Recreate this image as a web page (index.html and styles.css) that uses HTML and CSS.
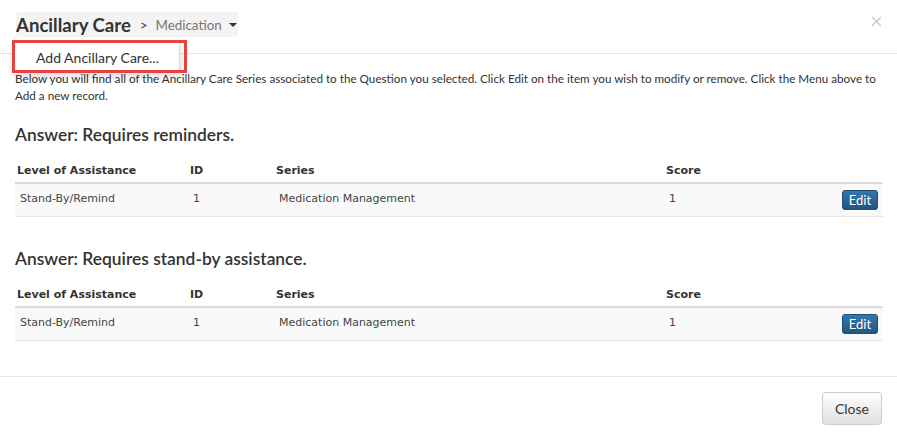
FILE: index.html
```html
<!DOCTYPE html>
<html>
<head>
<meta charset="utf-8">
<link rel="stylesheet" href="styles.css">
</head>
<body>
<div class="modal">
  <div class="modal-header">
    <div class="title-wrap">
      <div class="title-btn">
        <span class="title-main">Ancillary Care</span>
        <span class="title-sep">&gt;</span>
        <span class="title-sub">Medication</span>
        <span class="caret"></span>
      </div>
      <div class="menu">
        <div class="menu-item">Add Ancillary Care...</div>
      </div>
      <div class="highlight"></div>
    </div>
    <button class="close-x" aria-label="Close">
      <svg width="11" height="11" viewBox="0 0 11 11"><path d="M1 1 L10 10 M10 1 L1 10" stroke="#c4c4c4" stroke-width="1.3" fill="none"/></svg>
    </button>
  </div>
  <div class="modal-body">
    <p class="intro">Below you will find all of the Ancillary Care Series associated to the Question you selected. Click Edit on the item you wish to modify or remove. Click the Menu above to Add a new record.</p>

    <section class="answer">
      <h3 class="answer-title">Answer: Requires reminders.</h3>
      <table class="grid">
        <colgroup>
          <col class="c1"><col class="c2"><col class="c3"><col class="c4"><col class="c5">
        </colgroup>
        <thead>
          <tr><th>Level of Assistance</th><th>ID</th><th>Series</th><th>Score</th><th></th></tr>
        </thead>
        <tbody>
          <tr><td>Stand-By/Remind</td><td>1</td><td>Medication Management</td><td>1</td><td class="act"><button class="btn-edit">Edit</button></td></tr>
        </tbody>
      </table>
    </section>

    <section class="answer second">
      <h3 class="answer-title">Answer: Requires stand-by assistance.</h3>
      <table class="grid">
        <colgroup>
          <col class="c1"><col class="c2"><col class="c3"><col class="c4"><col class="c5">
        </colgroup>
        <thead>
          <tr><th>Level of Assistance</th><th>ID</th><th>Series</th><th>Score</th><th></th></tr>
        </thead>
        <tbody>
          <tr><td>Stand-By/Remind</td><td>1</td><td>Medication Management</td><td>1</td><td class="act"><button class="btn-edit">Edit</button></td></tr>
        </tbody>
      </table>
    </section>
  </div>
  <div class="modal-footer">
    <button class="btn-close">Close</button>
  </div>
</div>
</body>
</html>
```

FILE: styles.css
```css
* { box-sizing: border-box; }
html, body { margin: 0; padding: 0; background: #fff; }
body { font-family: Lato, "Open Sans", Arial, sans-serif; color: #333; }

.modal { width: 897px; }

.modal-header {
  display: flex;
  justify-content: space-between;
  align-items: flex-start;
  padding: 12px 15px 15px 16px;
  border-bottom: 1px solid #e5e5e5;
  height: 54px;
}
.title-wrap { position: relative; }
.title-btn {
  display: flex;
  align-items: center;
  height: 25px;
  background: #f3f3f3;
  border-radius: 3px;
  padding: 1px 1px 0 0;
  white-space: nowrap;
}
.title-main { font-size: 18.6px; font-weight: 700; color: #333; }
.title-sep { font-size: 13px; color: #333; margin: 0 8px 0 9px; }
.title-sub { font-size: 13.4px; color: #777; }
.caret {
  width: 0; height: 0;
  border-left: 4px solid transparent;
  border-right: 4px solid transparent;
  border-top: 4px solid #333;
  margin-left: 7px;
}

.menu {
  position: absolute;
  left: -2px;
  top: 30px;
  width: 166px;
  height: 29px;
  background: #fff;
  border: 1px solid rgba(0,0,0,.15);
  box-shadow: 0 4px 10px rgba(0,0,0,.18);
  display: flex;
  align-items: center;
  padding-left: 21px;
  padding-top: 2px;
  white-space: nowrap;
}
.menu-item { font-size: 14px; color: #333; }
.highlight {
  position: absolute;
  left: -4px;
  top: 28px;
  width: 175px;
  height: 33px;
  border: 3px solid #e8413f;
}

.close-x {
  border: 0;
  background: transparent;
  padding: 0;
  margin-top: 3px;
  margin-right: 0;
  cursor: pointer;
}

.modal-body { padding: 16px 15px 35px 15px; }
.intro {
  margin: 0;
  font-size: 11.7px;
  line-height: 17px;
  color: #333;
}

.answer { margin-top: 20px; }
.answer.second { margin-top: 31px; }
.answer-title {
  margin: 0 0 14px 0;
  font-size: 17.4px;
  line-height: 22px;
  font-weight: 600;
  color: #333;
}

.grid {
  width: 868px;
  table-layout: fixed;
  border-collapse: collapse;
  font-family: Verdana, "DejaVu Sans", sans-serif;
  font-size: 11px;
}
.c1 { width: 173px; }
.c2 { width: 86px; }
.c3 { width: 390px; }
.c4 { width: 100px; }
.c5 { width: 119px; }

.grid th {
  text-align: left;
  font-weight: 700;
  color: #333;
  padding: 4px 2px 4px 2px;
  line-height: 14px;
  border-bottom: 2px solid #ddd;
}
.grid td {
  background: #f9f9f9;
  color: #444;
  padding: 8px 5px 6px 5px;
  line-height: 14px;
  vertical-align: top;
  border-bottom: 1px solid #e6e6e6;
}
.grid td.act { text-align: right; padding: 6px 5px; }

.btn-edit {
  height: 20px;
  width: 36px;
  padding: 0;
  border: 1px solid #204d74;
  border-radius: 3px;
  background: linear-gradient(#3476b0, #23557f);
  color: #fff;
  font-family: Lato, Arial, sans-serif;
  font-size: 13px;
  line-height: 18px;
}

.modal-footer {
  display: flex;
  justify-content: flex-end;
  padding: 15px 15px;
  border-top: 1px solid #e5e5e5;
}
.btn-close {
  width: 60px;
  height: 33px;
  border: 1px solid #ccc;
  border-radius: 4px;
  background: linear-gradient(#fff, #e0e0e0);
  color: #333;
  font-family: Lato, Arial, sans-serif;
  font-size: 14px;
  padding: 0;
}
```
